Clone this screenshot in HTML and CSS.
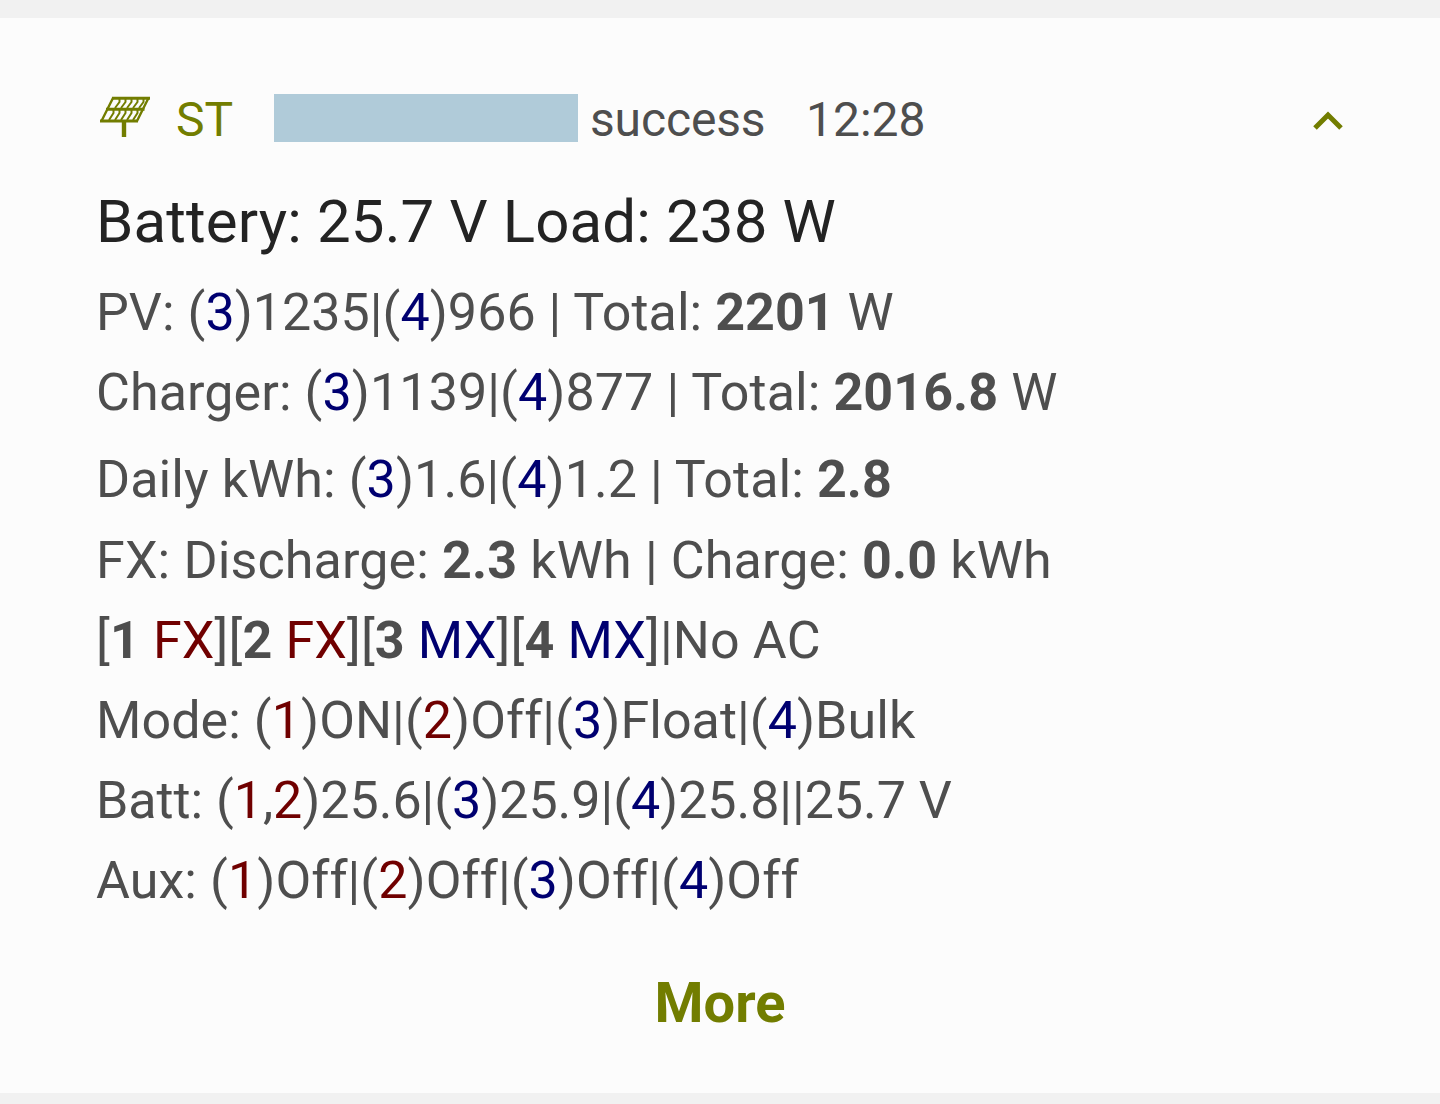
FILE: index.html
```html
<!DOCTYPE html>
<html lang="en">
<head>
<meta charset="utf-8">
<title>Solar status</title>
<link rel="stylesheet" href="styles.css">
</head>
<body>
<main class="card">
  <header class="head">
    <svg class="panel" viewBox="0 0 52 42" aria-hidden="true">
      <path d="M13 2.300H51M7 13.300H45.500M1 25H39" stroke-width="3"/>
      <path d="M14 2L2.500 25M49.500 2L38 25" stroke-width="2.400"/>
      <path d="M20.500 3V6L16 12M26.500 3V6L22 12M32.500 3V6L28 12M38.500 3V6L34 12M44.500 3V6L40 12M14.500 14V17L10 24M20.500 14V17L16 24M26.500 14V17L22 24M32.500 14V17L28 24M38.500 14V17L34 24" stroke-width="2"/>
      <path d="M25 26V41" stroke-width="4.400"/>
    </svg>
    <span class="app">ST</span>
    <span class="redacted"></span>
    <span class="state">success</span>
    <span class="time">12:28</span>
    <svg class="chevron" viewBox="0 0 32 20" aria-hidden="true"><path d="M3 17L16 4l13 13"/></svg>
  </header>
  <h1 class="title">Battery: 25.7 V Load: 238 W</h1>
  <div class="lines">
    <p class="line pv">PV: (<i class="mx">3</i>)1235|(<i class="mx">4</i>)966 | Total: <b>2201</b> W</p>
    <p class="line charger">Charger: (<i class="mx">3</i>)1139|(<i class="mx">4</i>)877 | Total: <b>2016.8</b> W</p>
    <p class="line daily">Daily kWh: (<i class="mx">3</i>)1.6|(<i class="mx">4</i>)1.2 | Total: <b>2.8</b></p>
    <p class="line energy">FX: Discharge: <b>2.3</b> kWh | Charge: <b>0.0</b> kWh</p>
    <p class="line devices">[<b>1</b> <i class="fx">FX</i>][<b>2</b> <i class="fx">FX</i>][<b>3</b> <i class="mx">MX</i>][<b>4</b> <i class="mx">MX</i>]|No AC</p>
    <p class="line mode">Mode: (<i class="fx">1</i>)ON|(<i class="fx">2</i>)Off|(<i class="mx">3</i>)Float|(<i class="mx">4</i>)Bulk</p>
    <p class="line batt">Batt: (<i class="fx">1</i>,<i class="fx">2</i>)25.6|(<i class="mx">3</i>)25.9|(<i class="mx">4</i>)25.8||25.7 V</p>
    <p class="line aux">Aux: (<i class="fx">1</i>)Off|(<i class="fx">2</i>)Off|(<i class="mx">3</i>)Off|(<i class="mx">4</i>)Off</p>
  </div>
  <div class="more">More</div>
</main>
</body>
</html>
```
FILE: styles.css
```css
* { box-sizing: border-box; }
body { margin: 0; padding: 18px 0 11px; height: 1104px; background: #f1f1f1; font-family: Roboto, sans-serif; color: #4e4e4e; }
.card { height: 1075px; padding: 76px 96px 0; background: #fcfcfc; }
.head { display: flex; align-items: center; height: 48px; font-size: 48px; line-height: 52px; white-space: nowrap; }
.panel { width: 52px; height: 42px; margin: 0 25px 2px 3px; fill: none; stroke: #727d00; }
.app { width: 98px; padding-top: 4px; color: #727d00; }
.redacted { width: 304px; height: 48px; background: #b0cbd9; margin-right: 12px; }
.state { width: 216px; padding-top: 4px; letter-spacing: -0.15px; }
.time { padding-top: 4px; }
.chevron { width: 32px; height: 20px; margin: 6px 0 0 auto; fill: none; stroke: #727d00; stroke-width: 5; }
.title { margin: 45px 0 0; height: 70px; font-size: 60px; line-height: 70px; font-weight: 400; letter-spacing: 0.13px; color: #232323; white-space: nowrap; }
.lines { margin-top: 16px; }
.line { margin: 0; height: 80px; font-size: 52px; line-height: 80px; white-space: nowrap; }
.pv { letter-spacing: 0.04px; }
.charger { margin-bottom: 7px; letter-spacing: 0.09px; }
.daily { margin-bottom: 1px; letter-spacing: 0.08px; }
.energy { letter-spacing: 0.14px; }
.devices { letter-spacing: 0.13px; }
.mode { letter-spacing: 0.06px; }
.batt { letter-spacing: -0.04px; }
.aux { letter-spacing: 0.08px; }
.mx, .fx { font-style: normal; }
.mx { color: #000070; }
.fx { color: #700000; }
.more { margin-top: 49px; font-size: 56px; line-height: 66px; font-weight: 700; text-align: center; color: #727d00; }
```
